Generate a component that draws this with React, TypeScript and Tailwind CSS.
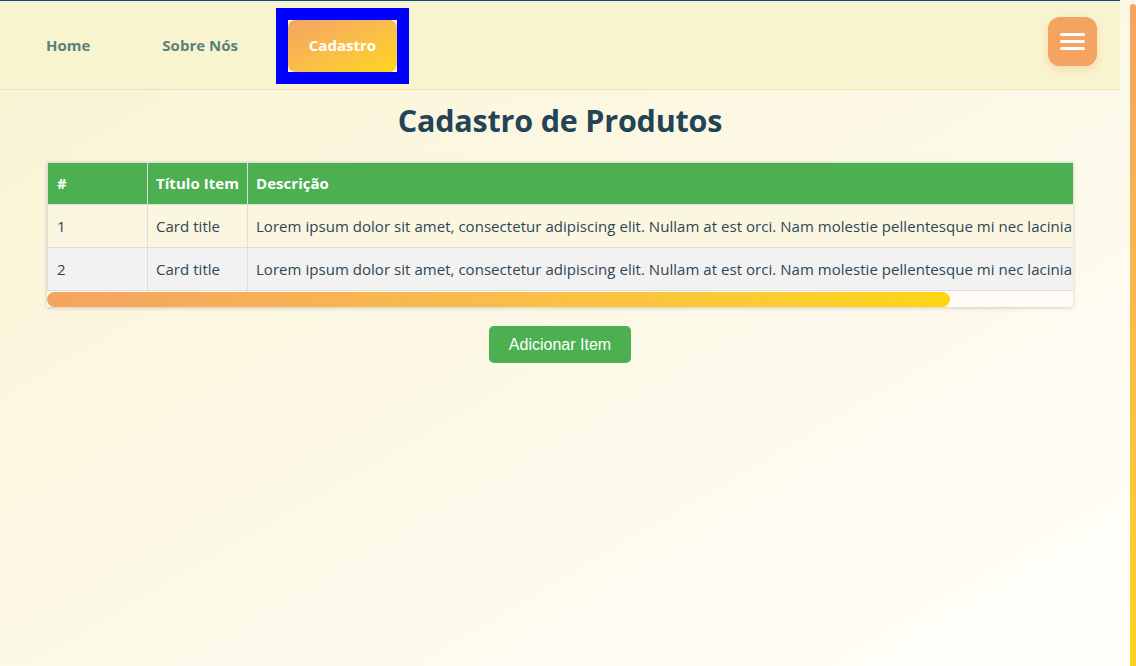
import React from "react";

const rows = [
  { id: 1, title: "Card title" },
  { id: 2, title: "Card title" },
];

const lorem =
  "Lorem ipsum dolor sit amet, consectetur adipiscing elit. Nullam at est orci. Nam molestie pellentesque mi nec lacinia.";

export default function App() {
  return (
    <div className="flex h-[666px] w-[1136px] overflow-hidden bg-gradient-to-br from-[#faf3d2] to-[#fffefb] font-['Open_Sans',sans-serif]">
      <div className="flex w-[1120px] flex-col">
        <div className="h-px bg-[#134a7c]" />
        <nav className="flex h-[89px] items-center border-b border-[#f6e2b8] bg-[#f9f4d0] pl-[46px] pr-[23px]">
          <a className="text-[15px] font-bold text-[#5d7f7b]">Home</a>
          <a className="ml-[72px] text-[15px] font-bold text-[#5d7f7b]">Sobre Nós</a>
          <div className="ml-[38px] mt-[1px] border-[12px] border-[#0000ff]">
            <div className="flex h-[52px] w-[109px] items-center justify-center rounded-lg bg-gradient-to-br from-[#f4a460] to-[#ffd50f] text-[15px] font-bold text-white">
              Cadastro
            </div>
          </div>
          <button className="mb-[7px] ml-auto flex h-[49px] w-[49px] flex-col items-center justify-center gap-[4px] rounded-xl bg-[#f4a460] shadow-[0_3px_8px_rgba(244,164,96,0.35)]">
            <span className="h-[3px] w-[25px] rounded-sm bg-white" />
            <span className="h-[3px] w-[25px] rounded-sm bg-white" />
            <span className="h-[3px] w-[25px] rounded-sm bg-white" />
          </button>
        </nav>

        <main className="flex flex-col items-center">
          <h1 className="mt-[10px] text-[30.5px] font-bold leading-[40px] tracking-[-0.2px] text-[#234456]">
            Cadastro de Produtos
          </h1>

          <div className="mt-[22px] w-[1026px] bg-[#fffcf5] shadow-[0_1px_4px_rgba(0,0,0,0.18)]">
            <div className="overflow-hidden">
              <table className="w-[1180px] border-collapse whitespace-nowrap text-left text-[15px] tracking-[0.04px]">
                <thead>
                  <tr className="h-[42px] bg-[#4caf50] text-white">
                    <th className="w-[100px] border border-[#dddddd] px-[9px] font-bold">#</th>
                    <th className="w-[100px] border border-[#dddddd] px-[8px] font-bold">Título Item</th>
                    <th className="border border-[#dddddd] px-[8px] font-bold">Descrição</th>
                  </tr>
                </thead>
                <tbody className="text-[#2e4656]">
                  {rows.map((r) => (
                    <tr
                      key={r.id}
                      className={`h-[43px] ${r.id % 2 === 0 ? "bg-[#f2f2f2]" : "bg-[#fbf6e0]"}`}
                    >
                      <td className="border border-[#dddddd] px-[9px]">{r.id}</td>
                      <td className="border border-[#dddddd] px-[8px]">{r.title}</td>
                      <td className="border border-[#dddddd] px-[8px]">{lorem}</td>
                    </tr>
                  ))}
                </tbody>
              </table>
            </div>
            <div className="h-[16px] pt-[1px]">
              <div className="h-[15px] w-[903px] rounded-full bg-gradient-to-r from-[#f4a460] to-[#ffd50f]" />
            </div>
          </div>

          <button className="mt-[19px] h-[37px] w-[142px] rounded-[5px] bg-[#4caf50] font-['Liberation_Sans',Arial,sans-serif] text-[16px] text-white">
            Adicionar Item
          </button>
        </main>
      </div>
      <div className="flex w-[16px] justify-end">
        <div className="mt-[4px] h-[700px] w-[6px] rounded-t-md bg-gradient-to-b from-[#f4a460] to-[#ffd50f]" />
      </div>
    </div>
  );
}
